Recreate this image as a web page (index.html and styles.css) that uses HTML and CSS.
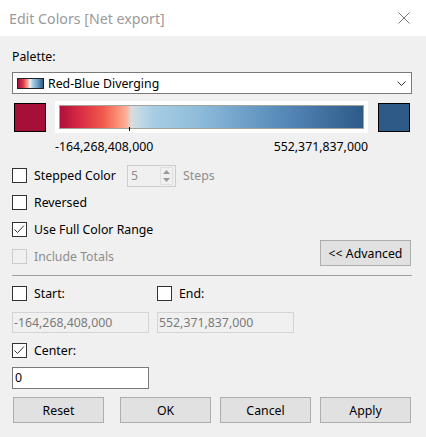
FILE: index.html
```html
<!DOCTYPE html>
<html>
<head>
<meta charset="utf-8">
<link rel="stylesheet" href="styles.css">
</head>
<body>
<div class="titlebar">
  <span class="title">Edit Colors [Net export]</span>
  <svg class="close" width="12" height="12" viewBox="0 0 12 12"><path d="M0.5 0.5 L11.5 11.5 M11.5 0.5 L0.5 11.5" stroke="#777" stroke-width="1" fill="none"/></svg>
</div>
<div class="dialog">
  <div class="label">Palette:</div>
  <div class="select">
    <span class="pal-icon"></span>
    <span class="select-text">Red-Blue Diverging</span>
    <svg class="chev" width="9" height="5" viewBox="0 0 9 5"><path d="M0.5 0.5 L4.5 4.5 L8.5 0.5" stroke="#333" stroke-width="1" fill="none"/></svg>
  </div>
  <div class="ramp-row">
    <div class="swatch red"></div>
    <div class="ramp-well"><div class="ramp"><span class="tick"></span></div></div>
    <div class="swatch blue"></div>
  </div>
  <div class="range-labels"><span>-164,268,408,000</span><span>552,371,837,000</span></div>

  <div class="options">
    <div class="row">
      <span class="cb"></span><span class="txt wide">Stepped Color</span>
      <div class="spin"><span>5</span>
        <div class="spin-btns">
          <svg width="7" height="4" viewBox="0 0 7 4"><path d="M3.5 0 L7 4 L0 4 Z" fill="#9a9a9a"/></svg>
          <svg width="7" height="4" viewBox="0 0 7 4"><path d="M0 0 L7 0 L3.5 4 Z" fill="#9a9a9a"/></svg>
        </div>
      </div>
      <span class="muted steps">Steps</span>
    </div>
    <div class="row"><span class="cb"></span><span class="txt">Reversed</span></div>
    <div class="row"><span class="cb"><svg width="13" height="13" viewBox="0 0 13 13"><path d="M1.5 6.5 L4.5 9.5 L11 2.5" stroke="#333" stroke-width="1" fill="none"/></svg></span><span class="txt">Use Full Color Range</span></div>
    <div class="row last">
      <span class="cb disabled"></span><span class="txt muted">Include Totals</span>
      <button class="btn adv">&lt;&lt; Advanced</button>
    </div>
  </div>

  <div class="sep"></div>

  <div class="range-grid">
    <div class="row"><span class="cb"></span><span class="txt">Start:</span></div>
    <div class="row"><span class="cb"></span><span class="txt">End:</span></div>
    <div class="field disabled">-164,268,408,000</div>
    <div class="field disabled">552,371,837,000</div>
  </div>

  <div class="row center-row"><span class="cb"><svg width="13" height="13" viewBox="0 0 13 13"><path d="M1.5 6.5 L4.5 9.5 L11 2.5" stroke="#333" stroke-width="1" fill="none"/></svg></span><span class="txt">Center:</span></div>
  <div class="field center-field">0</div>

  <div class="buttons">
    <button class="btn">Reset</button>
    <button class="btn ok">OK</button>
    <button class="btn gap9">Cancel</button>
    <button class="btn gap9">Apply</button>
  </div>
</div>
</body>
</html>
```

FILE: styles.css
```css
* { box-sizing: border-box; }
html, body { margin: 0; padding: 0; }
body {
  width: 426px;
  height: 437px;
  overflow: hidden;
  background: #f0f0f0;
  font-family: "Noto Sans", "Open Sans", sans-serif;
  font-size: 12.3px;
  color: #000;
}
.titlebar {
  height: 36px;
  background: #fff;
  display: flex;
  align-items: center;
  justify-content: space-between;
  padding: 0 16px 0 9px;
}
.title { font-size: 14.2px; color: #9a9a9a; }
.close { display: block; }
.dialog { padding: 0 14px 0 12px; }
.label { margin-top: 11px; line-height: 20px; }
.select {
  margin-top: 5px;
  height: 22px;
  background: #fff;
  border: 1px solid #7a7a7a;
  display: flex;
  align-items: center;
  padding: 0 5px 0 4px;
}
.pal-icon {
  width: 27px;
  height: 11px;
  border: 1px solid #222;
  background: linear-gradient(to right, #a50f38 0%, #d9374a 20%, #f7a08c 38%, #f4f4f4 48%, #a9cfe5 58%, #6e9fc9 78%, #2e5a87 100%);
  flex: none;
}
.select-text { flex: 1; margin-left: 4px; }
.chev { display: block; }
.ramp-row {
  margin-top: 7px;
  height: 32px;
  display: flex;
  align-items: center;
}
.swatch { width: 32px; height: 29px; border: 1px solid #000; flex: none; }
.swatch.red { margin-left: 2px; background: #a50f38; }
.swatch.blue { margin-left: 10px; background: #2e5a87; }
.ramp-well {
  margin-left: 9px;
  width: 313px;
  height: 32px;
  background: #fff;
  padding: 4px;
}
.ramp {
  position: relative;
  height: 24px;
  border: 1px solid #a3a39c;
  background: linear-gradient(to right, #b0103a 0%, #db2e45 7%, #f0584c 14%, #fb8f76 19%, #fdb09a 22%, #dcdcdc 23.5%, #bcd7e6 27%, #a7cde4 31%, #90bddb 45%, #6c9ec8 62%, #4f81b2 78%, #2e5a87 100%);
}
.tick {
  position: absolute;
  left: 69px;
  bottom: -3px;
  width: 1px;
  height: 4px;
  background: #000;
}
.range-labels {
  margin-top: 4px;
  line-height: 20px;
  display: flex;
  justify-content: space-between;
  padding: 0 44px 0 43px;
}
.options { margin-top: 5px; }
.row { height: 27px; display: flex; align-items: center; }
.cb {
  width: 15px;
  height: 15px;
  border: 1px solid #333;
  background: #fff;
  margin-right: 7px;
  flex: none;
  display: flex;
  align-items: center;
  justify-content: center;
}
.cb svg { display: block; }
.cb.disabled { border-color: #cccccc; background: #f0f0f0; }
.txt.wide { width: 93px; flex: none; }
.muted { color: #8d8d8d; }
.spin {
  width: 49px;
  height: 22px;
  border: 1px solid #cccccc;
  background: #f0f0f0;
  color: #8d8d8d;
  display: flex;
  align-items: center;
  padding: 0 2px 0 3px;
}
.spin-btns {
  margin-left: auto;
  width: 13px;
  height: 18px;
  border: 1px solid #e0e0e0;
  display: flex;
  flex-direction: column;
  align-items: center;
  justify-content: space-around;
}
.spin-btns svg { display: block; }
.steps { margin-left: 7px; }
.row.last { justify-content: flex-start; }
.btn {
  width: 91px;
  height: 26px;
  background: #e1e1e1;
  border: 1px solid #adadad;
  border-radius: 0;
  font-family: inherit;
  font-size: 12.3px;
  color: #000;
  padding: 0;
  flex: none;
}
.adv { margin-left: auto; margin-top: -7px; margin-right: 1px; }
.sep { margin-top: 5px; height: 1px; background: #a0a0a0; }
.range-grid {
  margin-top: 4px;
  display: grid;
  grid-template-columns: 137px 137px;
  column-gap: 8px;
}
.field {
  height: 21px;
  line-height: 19px;
  border: 1px solid #d4d4d4;
  padding-left: 1px;
  margin-top: 5px;
}
.field.disabled { background: #f0f0f0; color: #7a7a7a; }
.center-row { margin-top: 4px; }
.center-field {
  margin-top: 3px;
  width: 137px;
  height: 22px;
  line-height: 20px;
  background: #fff;
  border: 1px solid #7a7a7a;
  padding-left: 2px;
}
.buttons {
  margin-top: 8px;
  display: flex;
  padding-left: 1px;
}
.btn.ok { margin-left: 16px; }
.btn.gap9 { margin-left: 9px; }
```
